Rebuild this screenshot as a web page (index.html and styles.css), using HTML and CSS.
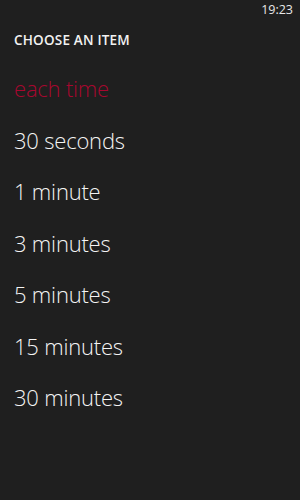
FILE: index.html
```html
<!DOCTYPE html>
<html>
<head>
    <title>Choose an item</title>
    <link rel="stylesheet" href="styles.css">
</head>
<body>
    <div class="status-bar">
        <span class="clock">19:23</span>
    </div>
    <div class="picker">
        <h3>CHOOSE AN ITEM</h3>
        <ul class="item-list">
            <li class="item selected">each time</li>
            <li class="item">30 seconds</li>
            <li class="item">1 minute</li>
            <li class="item">3 minutes</li>
            <li class="item">5 minutes</li>
            <li class="item">15 minutes</li>
            <li class="item">30 minutes</li>
        </ul>
    </div>
</body>
</html>
```

FILE: styles.css
```css
body {
    margin: 0;
    height: 100vh;
    background: #1f1f1f;
    color: #f2f2f2;
    font-family: "Open Sans", "Noto Sans", sans-serif;
}
.status-bar {
    display: flex;
    justify-content: flex-end;
    height: 20px;
    padding-right: 7px;
}
.clock {
    font-size: 12.5px;
    line-height: 19px;
    color: #e8e8e8;
}
.picker {
    padding: 0 14px;
}
h3 {
    margin: 10px 0 0 0;
    font-size: 13.5px;
    font-weight: 600;
    line-height: 20px;
    letter-spacing: 0.2px;
}
.item-list {
    list-style: none;
    margin: 13px 0 0 0;
    padding: 0;
}
.item {
    font-size: 22px;
    font-weight: 350;
    line-height: 51.5px;
    color: #f4f4f4;
    letter-spacing: -0.2px;
}
.item.selected {
    color: #a8072f;
}
```
